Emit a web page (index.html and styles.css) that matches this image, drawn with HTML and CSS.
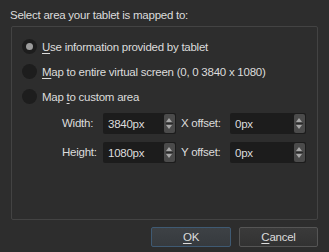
FILE: index.html
```html
<!DOCTYPE html>
<html lang="en">
<head>
    <meta charset="UTF-8">
    <title>Tablet Mapping</title>
    <link rel="stylesheet" href="styles.css">
</head>
<body>
    <div class="dialog">
        <div class="title">Select area your tablet is mapped to:</div>
        <div class="group">
            <div class="radio-row">
                <span class="radio checked"></span>
                <span class="label"><u>U</u>se information provided by tablet</span>
            </div>
            <div class="radio-row">
                <span class="radio"></span>
                <span class="label"><u>M</u>ap to entire virtual screen (0, 0 3840 x 1080)</span>
            </div>
            <div class="radio-row">
                <span class="radio"></span>
                <span class="label">Map <u>t</u>o custom area</span>
            </div>
            <div class="fields">
                <span class="field-label">Width:</span>
                <div class="spin"><span class="value">3840px</span><span class="arrows"></span></div>
                <span class="field-label">X offset:</span>
                <div class="spin"><span class="value">0px</span><span class="arrows"></span></div>
                <span class="field-label">Height:</span>
                <div class="spin"><span class="value">1080px</span><span class="arrows"></span></div>
                <span class="field-label">Y offset:</span>
                <div class="spin"><span class="value">0px</span><span class="arrows"></span></div>
            </div>
        </div>
        <div class="buttons">
            <button class="btn default"><u>O</u>K</button>
            <button class="btn"><u>C</u>ancel</button>
        </div>
    </div>
</body>
</html>
```
FILE: styles.css
```css
body {
    margin: 0;
    background: #2d2d2d;
    font-family: 'Liberation Sans', Arial, sans-serif;
    font-size: 11.5px;
    letter-spacing: -0.25px;
    color: #dcdcdc;
}
.dialog {
    width: 329px;
    height: 252px;
    box-sizing: border-box;
    padding: 8px 11px 0 11px;
}
.title {
    line-height: 15px;
    margin-left: -1px;
    height: 18px;
}
.group {
    height: 194px;
    box-sizing: border-box;
    border: 1px solid #434343;
    border-radius: 2px;
    padding: 7px 0 0 10px;
}
.radio-row {
    display: flex;
    align-items: center;
    height: 25px;
}
.radio {
    width: 15px;
    height: 15px;
    border-radius: 50%;
    background: #1d1d1d;
    margin-right: 5px;
    position: relative;
}
.radio.checked::after {
    content: "";
    position: absolute;
    left: 4px;
    top: 4px;
    width: 7px;
    height: 7px;
    border-radius: 50%;
    background: #9c9c9c;
}
.label u, .btn u {
    text-decoration-thickness: 1px;
    text-underline-offset: 2px;
}
.fields {
    display: grid;
    grid-template-columns: 36px 73px 44px 76px;
    column-gap: 5px;
    row-gap: 8px;
    margin: 4px 0 0 40px;
    align-items: center;
}
.field-label {
    line-height: 21px;
}
.spin {
    height: 21px;
    background: #1c1c1c;
    border-radius: 2px;
    display: flex;
    align-items: center;
    justify-content: space-between;
    padding-left: 5px;
}
.arrows {
    width: 11px;
    height: 19px;
    margin-right: 1px;
    border-radius: 2px;
    background:
        linear-gradient(#2a2a2a, #2a2a2a) center / 7px 1px no-repeat,
        #4b4b4b;
    position: relative;
}
.arrows::before, .arrows::after {
    content: "";
    position: absolute;
    left: 2px;
    border-left: 3.5px solid transparent;
    border-right: 3.5px solid transparent;
}
.arrows::before {
    top: 4px;
    border-bottom: 4px solid #a8a8a8;
}
.arrows::after {
    bottom: 4px;
    border-top: 4px solid #a8a8a8;
}
.buttons {
    display: flex;
    justify-content: flex-end;
    gap: 8px;
    margin-top: 7px;
}
.btn {
    width: 79px;
    height: 20px;
    font-family: inherit;
    font-size: 11.5px;
    letter-spacing: inherit;
    color: #dcdcdc;
    background: linear-gradient(#3a3a3a, #323232);
    border: 1px solid #555555;
    border-radius: 2px;
    padding: 0;
}
.btn.default {
    width: 80px;
    border-color: #3f5a73;
    background: linear-gradient(#3d4145, #363a3e);
}
```
